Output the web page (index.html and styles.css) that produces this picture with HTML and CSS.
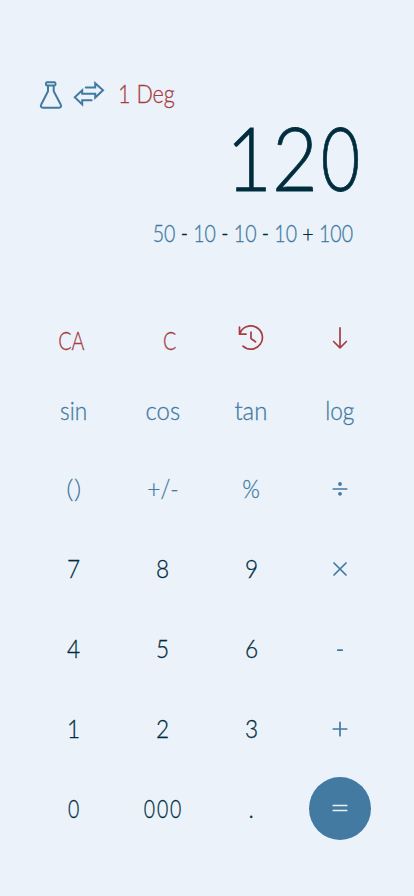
FILE: index.html
```html
<!DOCTYPE html>
<html lang="en">
<head>
<meta charset="utf-8">
<meta name="viewport" content="width=device-width, initial-scale=1">
<title>Calculator</title>
<link rel="stylesheet" href="styles.css">
</head>
<body>
<main class="calculator">
  <header class="toolbar">
    <svg class="flask" viewBox="0 0 24 28"><path d="M8 1.300h7.500c1.400 0 1.400 3.200 0 3.200H8c-1.400 0-1.400-3.200 0-3.200zM9 4.700v5.500L2.200 23.500c-1 1.800 0 3.300 1.800 3.300h16c1.800 0 2.700-1.500 1.700-3.300L14.700 10.200V4.700"/></svg>
    <svg class="swap" viewBox="0 0 32 26"><path d="M12.800 6.600h9.400V2.200l7.800 7.100-7.800 7.300v-3.800H9.200V9.300L1.800 16.300l7.400 7.200v-4.200h9.400M9.200 12.800h13"/></svg>
    <span class="mode">1 Deg</span>
  </header>
  <section class="display">
    <div class="result">12<i>0</i></div>
    <div class="expression">50 <b>-</b> 10 <b>-</b> 10 <b>-</b> 10 <b>+</b> 100</div>
  </section>
  <section class="keys">
    <div class="key red ca"><span>CA</span></div>
    <div class="key red clear"><span>C</span></div>
    <div class="key red history"><svg viewBox="0 0 28 28"><path d="M2.500 3v7.200h6.500M2.800 9.900A11.600 11.600 0 1 1 6 22.100M14 8v6.500l4.500 3.300"/></svg></div>
    <div class="key red down"><svg viewBox="0 0 28 28"><path d="M14 3.800v20M7.600 17.500l6.400 6.300 6.400-6.300"/></svg></div>

    <div class="key fn"><span>sin</span></div>
    <div class="key fn wide"><span>cos</span></div>
    <div class="key fn wide"><span>tan</span></div>
    <div class="key fn"><span>log</span></div>

    <div class="key parens"><span>()</span></div>
    <div class="key sign"><span>+/-</span></div>
    <div class="key"><span>%</span></div>
    <div class="key"><svg viewBox="0 0 28 28"><path d="M7.300 14h13.400"/><circle cx="14" cy="9" r="1.900"/><circle cx="14" cy="18.800" r="1.900"/></svg></div>

    <div class="key num"><span>7</span></div>
    <div class="key num"><span>8</span></div>
    <div class="key num"><span>9</span></div>
    <div class="key"><svg viewBox="0 0 28 28"><path d="M8 8l12 12M20 8L8 20"/></svg></div>

    <div class="key num"><span>4</span></div>
    <div class="key num"><span>5</span></div>
    <div class="key num"><span>6</span></div>
    <div class="key minus"><svg viewBox="0 0 28 28"><path d="M11.800 14.200h4.400"/></svg></div>

    <div class="key num"><span>1</span></div>
    <div class="key num"><span>2</span></div>
    <div class="key num"><span>3</span></div>
    <div class="key"><svg viewBox="0 0 28 28"><path d="M7.300 14h13.400M14 7.300v13.400"/></svg></div>

    <div class="key num"><span><i>0</i></span></div>
    <div class="key num"><span><i>0</i><i>0</i><i>0</i></span></div>
    <div class="key num"><span>.</span></div>
    <div class="key"><div class="disc"><svg viewBox="0 0 28 28"><path d="M7.300 11.500h13.400M7.300 16.500h13.400"/></svg></div></div>
  </section>
</main>
</body>
</html>
```
FILE: styles.css
```css
* { box-sizing: border-box; }

body {
  margin: 0;
  background: #ebf2fa;
  font-family: Lato, "Liberation Sans", sans-serif;
  font-weight: 300;
  color: #002d3d;
  -webkit-text-stroke: .3px currentColor;
}

svg {
  display: block;
  fill: none;
  stroke: currentColor;
  stroke-width: 1.7;
  stroke-linecap: round;
  stroke-linejoin: round;
}

i {
  display: inline-block;
  font-style: normal;
  transform: scaleX(.86);
}

.calculator {
  width: 414px;
  height: 896px;
  padding-top: 77px;
  overflow: hidden;
}

.toolbar {
  display: flex;
  height: 31px;
  padding-left: 39px;
  color: #427aa1;
}

.flask { width: 24px; height: 28px; margin-top: 4px; stroke-width: 2; }
.swap { width: 32px; height: 26px; margin: 4px 0 0 10px; stroke-width: 2; stroke-linejoin: miter; }

.mode {
  margin-left: 13px;
  font-size: 26px;
  line-height: 32px;
  color: #a63d40;
  transform: scaleX(.83);
  transform-origin: left;
}

.display { height: 197px; text-align: right; }

.result {
  height: 98px;
  padding-right: 50px;
  font-size: 89px;
  line-height: 98px;
  -webkit-text-stroke-width: .8px;
  transform: scaleX(.89);
  transform-origin: 363px 50%;
}

.expression {
  margin-top: 11px;
  padding-right: 61px;
  font-size: 23px;
  line-height: 32px;
  color: #427aa1;
  transform: scaleX(.85);
  transform-origin: 353px 50%;
}

.expression b { font-weight: 300; color: #002d3d; }

.keys {
  display: grid;
  grid-template-columns: repeat(4, 88.7px);
  grid-template-rows: 70px 73px repeat(5, 80px);
  padding-left: 29.500px;
}

.key {
  display: flex;
  align-items: center;
  justify-content: center;
  font-size: 26px;
  line-height: 32px;
  color: #427aa1;
}

.key span { transform: scaleX(.87); }
.key svg { width: 28px; height: 28px; }
.key > svg { margin-top: 2px; }
.key circle { fill: currentColor; stroke: none; }
.key.num { color: #002d3d; }
.key.red { color: #a63d40; }
.ca { padding-right: 6px; }
.key.ca span, .key.clear span { transform: scaleX(.76); }
.clear { padding-left: 15px; }
.history, .down { padding-bottom: 6px; }
.fn { padding-bottom: 4px; }
.key.wide span { transform: scaleX(.92); }
.key.parens span { transform: scaleX(1.15); -webkit-text-stroke-width: 0; }
.minus > svg { margin-top: 4px; }

.disc {
  display: grid;
  place-items: center;
  width: 62px;
  height: 63px;
  border-radius: 50%;
  background: #427aa1;
  color: #ebf2fa;
}
```
